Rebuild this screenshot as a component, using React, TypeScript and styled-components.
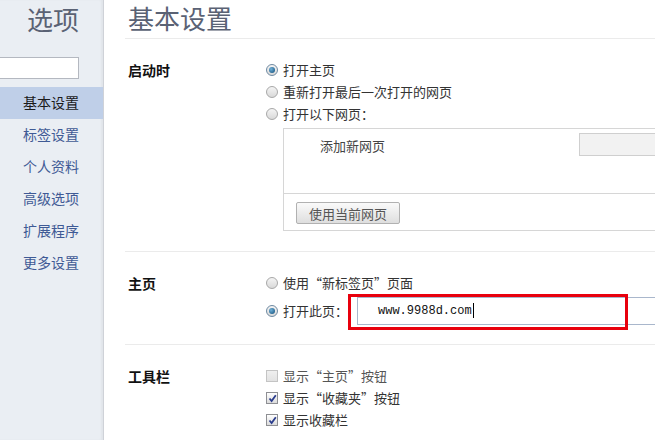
import React from 'react';
import styled, { createGlobalStyle } from 'styled-components';

const GlobalStyle = createGlobalStyle`
    html, body {
        margin: 0;
        padding: 0;
        overflow: hidden;
        background: #ffffff;
    }
    body {
        font-family: "Noto Sans CJK SC", "DejaVu Sans", sans-serif;
        font-size: 13px;
        color: #333;
    }
`;

const Page = styled.div`
    display: flex;
    width: 655px;
    height: 440px;
    overflow: hidden;
`;

const Sidebar = styled.div`
    flex: 0 0 103px;
    background: #eaeef3;
    border-right: 1px solid #cfd2d8;
    box-shadow: inset -2px 0 2px rgba(0, 0, 0, 0.04);
`;

const SideTitle = styled.div`
    height: 45px;
    padding-right: 24px;
    text-align: right;
    font-size: 26px;
    line-height: 38px;
    color: #5a6274;
`;

const SearchBox = styled.input`
    display: block;
    box-sizing: border-box;
    margin: 12px 0 0 -1px;
    width: 80px;
    height: 22px;
    border: 1px solid #b4b8c0;
    background: #fff;
    outline: none;
`;

const NavList = styled.div`
    margin-top: 8px;
`;

const NavItem = styled.div<{ $active?: boolean }>`
    height: 32px;
    line-height: 31px;
    padding-right: 24px;
    text-align: right;
    font-size: 14px;
    color: ${p => (p.$active ? '#1a1a1a' : '#3f5a95')};
    background: ${p => (p.$active ? '#bfcfe8' : 'transparent')};
`;

const Main = styled.div`
    flex: 1;
    padding-left: 21px;
    min-width: 0;
`;

const Heading = styled.div`
    height: 38px;
    padding-left: 3px;
    font-size: 26px;
    line-height: 36px;
    color: #5a6274;
    border-bottom: 1px solid #ebebeb;
`;

const Section = styled.div<{ $last?: boolean }>`
    display: grid;
    grid-template-columns: 138px 1fr;
    padding: 20px 0 ${p => (p.$last ? '0' : '18px')} 3px;
    border-bottom: ${p => (p.$last ? 'none' : '1px solid #ebebeb')};
`;

const Label = styled.div`
    font-size: 14px;
    font-weight: bold;
    color: #111;
    line-height: 22px;
`;

const Controls = styled.div`
    display: flex;
    flex-direction: column;
`;

const Row = styled.div`
    display: flex;
    align-items: center;
    gap: 5px;
    height: 22px;
    line-height: 22px;
    white-space: nowrap;
    color: #333;
`;

const InputRow = styled(Row)`
    height: 31px;
    margin-top: 1px;
`;

const Radio = styled.span<{ $checked?: boolean }>`
    position: relative;
    flex: 0 0 auto;
    box-sizing: border-box;
    width: 12px;
    height: 12px;
    border-radius: 50%;
    border: 1px solid ${p => (p.$checked ? '#6f8aa2' : '#a8a8a8')};
    background: linear-gradient(#f4f4f4, #d9d9d9);
    &::after {
        content: '';
        display: ${p => (p.$checked ? 'block' : 'none')};
        position: absolute;
        left: 2px;
        top: 2px;
        width: 6px;
        height: 6px;
        border-radius: 50%;
        background: radial-gradient(circle at 35% 35%, #6fb0d8, #0f4c78);
    }
`;

const CheckBox = styled.span<{ $disabled?: boolean }>`
    display: flex;
    align-items: center;
    justify-content: center;
    flex: 0 0 auto;
    box-sizing: border-box;
    width: 12px;
    height: 12px;
    border: 1px solid ${p => (p.$disabled ? '#c4c4c4' : '#8e8f93')};
    background: ${p => (p.$disabled ? 'linear-gradient(#efefef, #e2e2e2)' : 'linear-gradient(#ffffff, #dcdcdc)')};
`;

const DisabledText = styled.span`
    color: #555;
`;

const PageBox = styled.div`
    margin: 3px 0 2px 17px;
    width: 400px;
    border: 1px solid #d6d6d6;
`;

const PageBoxTop = styled.div`
    display: flex;
    align-items: flex-start;
    height: 64px;
    border-bottom: 1px solid #d6d6d6;
`;

const AddText = styled.div`
    width: 308px;
    padding: 7px 0 0 36px;
    box-sizing: border-box;
    color: #444;
`;

const GreyField = styled.div`
    margin-top: 4px;
    width: 110px;
    height: 23px;
    box-sizing: border-box;
    border: 1px solid #cfcfcf;
    background: #f2f2f2;
`;

const PageBoxBottom = styled.div`
    height: 36px;
    padding: 8px 0 0 12px;
    box-sizing: border-box;
`;

const GreyButton = styled.button`
    box-sizing: border-box;
    width: 104px;
    height: 22px;
    padding: 0;
    border: 1px solid #b1b1b1;
    border-radius: 2px;
    background: linear-gradient(#fafafa, #dedede);
    font-family: "Noto Sans CJK SC", sans-serif;
    font-size: 13px;
    color: #555;
`;

const UrlWrap = styled.div`
    position: relative;
    margin-left: 4px;
`;

const UrlField = styled.div`
    box-sizing: border-box;
    width: 320px;
    height: 28px;
    padding-left: 20px;
    display: flex;
    align-items: center;
    border: 1px solid #a9b7cc;
    background: #fff;
    font-family: "Liberation Mono", monospace;
    font-size: 12px;
    color: #111;
`;

const Caret = styled.span`
    display: inline-block;
    width: 1px;
    height: 15px;
    margin-left: 1px;
    background: #000;
`;

const Highlight = styled.div`
    position: absolute;
    left: -9px;
    top: -3px;
    width: 280px;
    height: 36px;
    box-sizing: border-box;
    border: 3px solid #e8000d;
    pointer-events: none;
`;

const CheckMark = () => (
    <svg width="9" height="9" viewBox="0 0 9 9">
        <path d="M1.5 4.5 L3.6 7 L7.8 1.2" fill="none" stroke="#2a3c8c" strokeWidth="1.8" />
    </svg>
);

const navItems = ['基本设置', '标签设置', '个人资料', '高级选项', '扩展程序', '更多设置'];

export default function App() {
    return (
        <Page>
            <GlobalStyle />
            <Sidebar>
                <SideTitle>选项</SideTitle>
                <SearchBox />
                <NavList>
                    {
                        navItems.map((item, ind) => (
                            <NavItem key={ind} $active={ind === 0}>{item}</NavItem>
                        ))
                    }
                </NavList>
            </Sidebar>
            <Main>
                <Heading>基本设置</Heading>

                <Section>
                    <Label>启动时</Label>
                    <Controls>
                        <Row><Radio $checked />打开主页</Row>
                        <Row><Radio />重新打开最后一次打开的网页</Row>
                        <Row><Radio />打开以下网页：</Row>
                        <PageBox>
                            <PageBoxTop>
                                <AddText>添加新网页</AddText>
                                <GreyField />
                            </PageBoxTop>
                            <PageBoxBottom>
                                <GreyButton>使用当前网页</GreyButton>
                            </PageBoxBottom>
                        </PageBox>
                    </Controls>
                </Section>

                <Section>
                    <Label>主页</Label>
                    <Controls>
                        <Row><Radio />使用“新标签页”页面</Row>
                        <InputRow>
                            <Radio $checked />打开此页：
                            <UrlWrap>
                                <UrlField>www.9988d.com<Caret /></UrlField>
                                <Highlight />
                            </UrlWrap>
                        </InputRow>
                    </Controls>
                </Section>

                <Section $last>
                    <Label>工具栏</Label>
                    <Controls>
                        <Row><CheckBox $disabled /><DisabledText>显示“主页”按钮</DisabledText></Row>
                        <Row><CheckBox><CheckMark /></CheckBox>显示“收藏夹”按钮</Row>
                        <Row><CheckBox><CheckMark /></CheckBox>显示收藏栏</Row>
                    </Controls>
                </Section>
            </Main>
        </Page>
    );
}
